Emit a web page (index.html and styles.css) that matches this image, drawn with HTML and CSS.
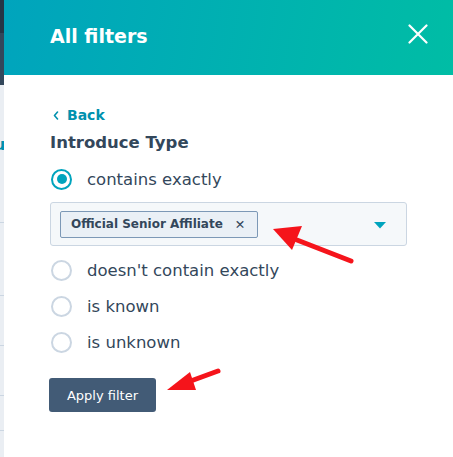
FILE: index.html
```html
<!DOCTYPE html>
<html>
<head>
<meta charset="utf-8">
<link rel="stylesheet" href="styles.css">
</head>
<body>
<div class="page">
  <div class="side">
    <div class="side-top"></div>
    <div class="side-mid"></div>
    <div class="side-rest">
      <span class="side-u">u</span>
      <div class="side-line l1"></div>
      <div class="side-line l2"></div>
      <div class="side-line l3"></div>
      <div class="side-line l4"></div>
      <div class="side-line l5"></div>
    </div>
  </div>
  <div class="panel">
    <div class="header">
      <h1 class="title">All filters</h1>
      <svg class="close" width="20" height="20" viewBox="0 0 20 20"><path d="M1.5 1.5 L18.5 18.5 M18.5 1.5 L1.5 18.5" stroke="#fff" stroke-width="2.2" stroke-linecap="round" fill="none"/></svg>
    </div>
    <div class="body">
      <a class="back"><svg class="chev" width="6" height="9" viewBox="0 0 6 9"><path d="M4.5 1 L1.5 4.5 L4.5 8" stroke="#0091ae" stroke-width="1.6" fill="none" stroke-linecap="round" stroke-linejoin="round"/></svg>Back</a>
      <div class="prop">Introduce Type</div>
      <div class="opt first"><span class="radio checked"></span><span class="label">contains exactly</span></div>
      <div class="select">
        <span class="tag">Official Senior Affiliate<span class="tag-x">✕</span></span>
        <svg class="caret" width="12" height="7" viewBox="0 0 12 7"><path d="M0 0 L12 0 L6 6.5 Z" fill="#00a4bd"/></svg>
      </div>
      <div class="opt after-select"><span class="radio"></span><span class="label">doesn't contain exactly</span></div>
      <div class="opt"><span class="radio"></span><span class="label">is known</span></div>
      <div class="opt"><span class="radio"></span><span class="label">is unknown</span></div>
      <button class="apply">Apply filter</button>
    </div>
  </div>
  <svg class="arrow" width="453" height="457" viewBox="0 0 453 457">
    <path d="M351 261 L297 240" stroke="#f5141b" stroke-width="5" stroke-linecap="round"/>
    <path d="M273 229 L302 226 L292 250 Z" fill="#f5141b"/>
    <path d="M218 371 L188 382" stroke="#f5141b" stroke-width="5" stroke-linecap="round"/>
    <path d="M167 390 L190 372 L196 390 Z" fill="#f5141b"/>
  </svg>
</div>
</body>
</html>
```
FILE: styles.css
```css
* { box-sizing: border-box; }
html, body { margin: 0; padding: 0; }
body {
  width: 453px;
  height: 457px;
  overflow: hidden;
  background: #fff;
  font-family: "DejaVu Sans", "Noto Sans", sans-serif;
  color: #33475b;
}
.page {
  position: relative;
  display: flex;
  width: 453px;
  height: 457px;
}
.side {
  width: 4px;
  display: flex;
  flex-direction: column;
  flex-shrink: 0;
}
.side-top { height: 33px; background: #263545; }
.side-mid { height: 52px; background: #33475b; }
.side-rest {
  flex: 1;
  background: #eaeef3;
  position: relative;
  overflow: hidden;
}
.side-u {
  position: absolute;
  left: -6px;
  top: 50px;
  color: #0091ae;
  font-size: 16px;
  font-weight: bold;
}
.side-line { position: absolute; left: 0; width: 4px; height: 1px; background: #cbd6e2; }
.l1 { top: 137px; }
.l2 { top: 210px; }
.l3 { top: 260px; }
.l4 { top: 310px; }
.l5 { top: 345px; }
.panel {
  flex: 1;
  display: flex;
  flex-direction: column;
}
.header {
  height: 75px;
  background: linear-gradient(100deg, #00a4bd 0%, #00bda5 100%);
  display: flex;
  align-items: center;
  justify-content: space-between;
  padding: 0 25px 0 46px;
}
.title {
  margin: -3px 0 0 0;
  color: #fff;
  font-size: 19px;
  font-weight: bold;
}
.close { margin-top: -8px; }
.body {
  padding: 30px 0 0 46px;
  display: flex;
  flex-direction: column;
  align-items: flex-start;
}
.back {
  display: flex;
  align-items: center;
  gap: 8px;
  color: #0091ae;
  font-size: 14px;
  font-weight: bold;
  line-height: 20px;
  margin-left: 3px;
}
.prop {
  font-size: 16.5px;
  font-weight: bold;
  line-height: 22px;
  margin-top: 7px;
  color: #33475b;
}
.opt {
  display: flex;
  align-items: center;
  height: 36px;
  gap: 15px;
}
.opt.first { margin-top: 7px; margin-bottom: 5px; }
.opt.after-select { margin-top: 6px; }
.radio {
  width: 21px;
  height: 21px;
  border-radius: 50%;
  border: 2px solid #cbd6e2;
  background: #fff;
  margin-left: 1px;
  position: relative;
  flex-shrink: 0;
}
.radio.checked { border-color: #00a4bd; }
.radio.checked::after {
  content: "";
  position: absolute;
  left: 3.5px;
  top: 3.5px;
  width: 10px;
  height: 10px;
  border-radius: 50%;
  background: #00a4bd;
}
.label { font-size: 16.5px; color: #33475b; }
.select {
  width: 357px;
  height: 44px;
  background: #f5f8fa;
  border: 1px solid #cbd6e2;
  border-radius: 3px;
  display: flex;
  align-items: center;
  justify-content: space-between;
  padding: 0 20px 0 9px;
}
.tag {
  display: flex;
  align-items: center;
  height: 27px;
  padding: 0 10px;
  border: 1px solid #7c98b6;
  border-radius: 2px;
  background: #eaf0f6;
  font-size: 12px;
  font-weight: bold;
  color: #33475b;
}
.tag-x { margin-left: 12px; margin-right: 2px; font-weight: normal; font-size: 12.5px; }
.caret { margin-top: 2px; }
.apply {
  margin-top: 18px;
  margin-left: -1px;
  width: 107px;
  height: 34px;
  background: #425b76;
  color: #fff;
  border: none;
  border-radius: 3px;
  font-family: inherit;
  font-size: 13px;
}
.arrow {
  position: absolute;
  left: 0;
  top: 0;
  pointer-events: none;
}
```
